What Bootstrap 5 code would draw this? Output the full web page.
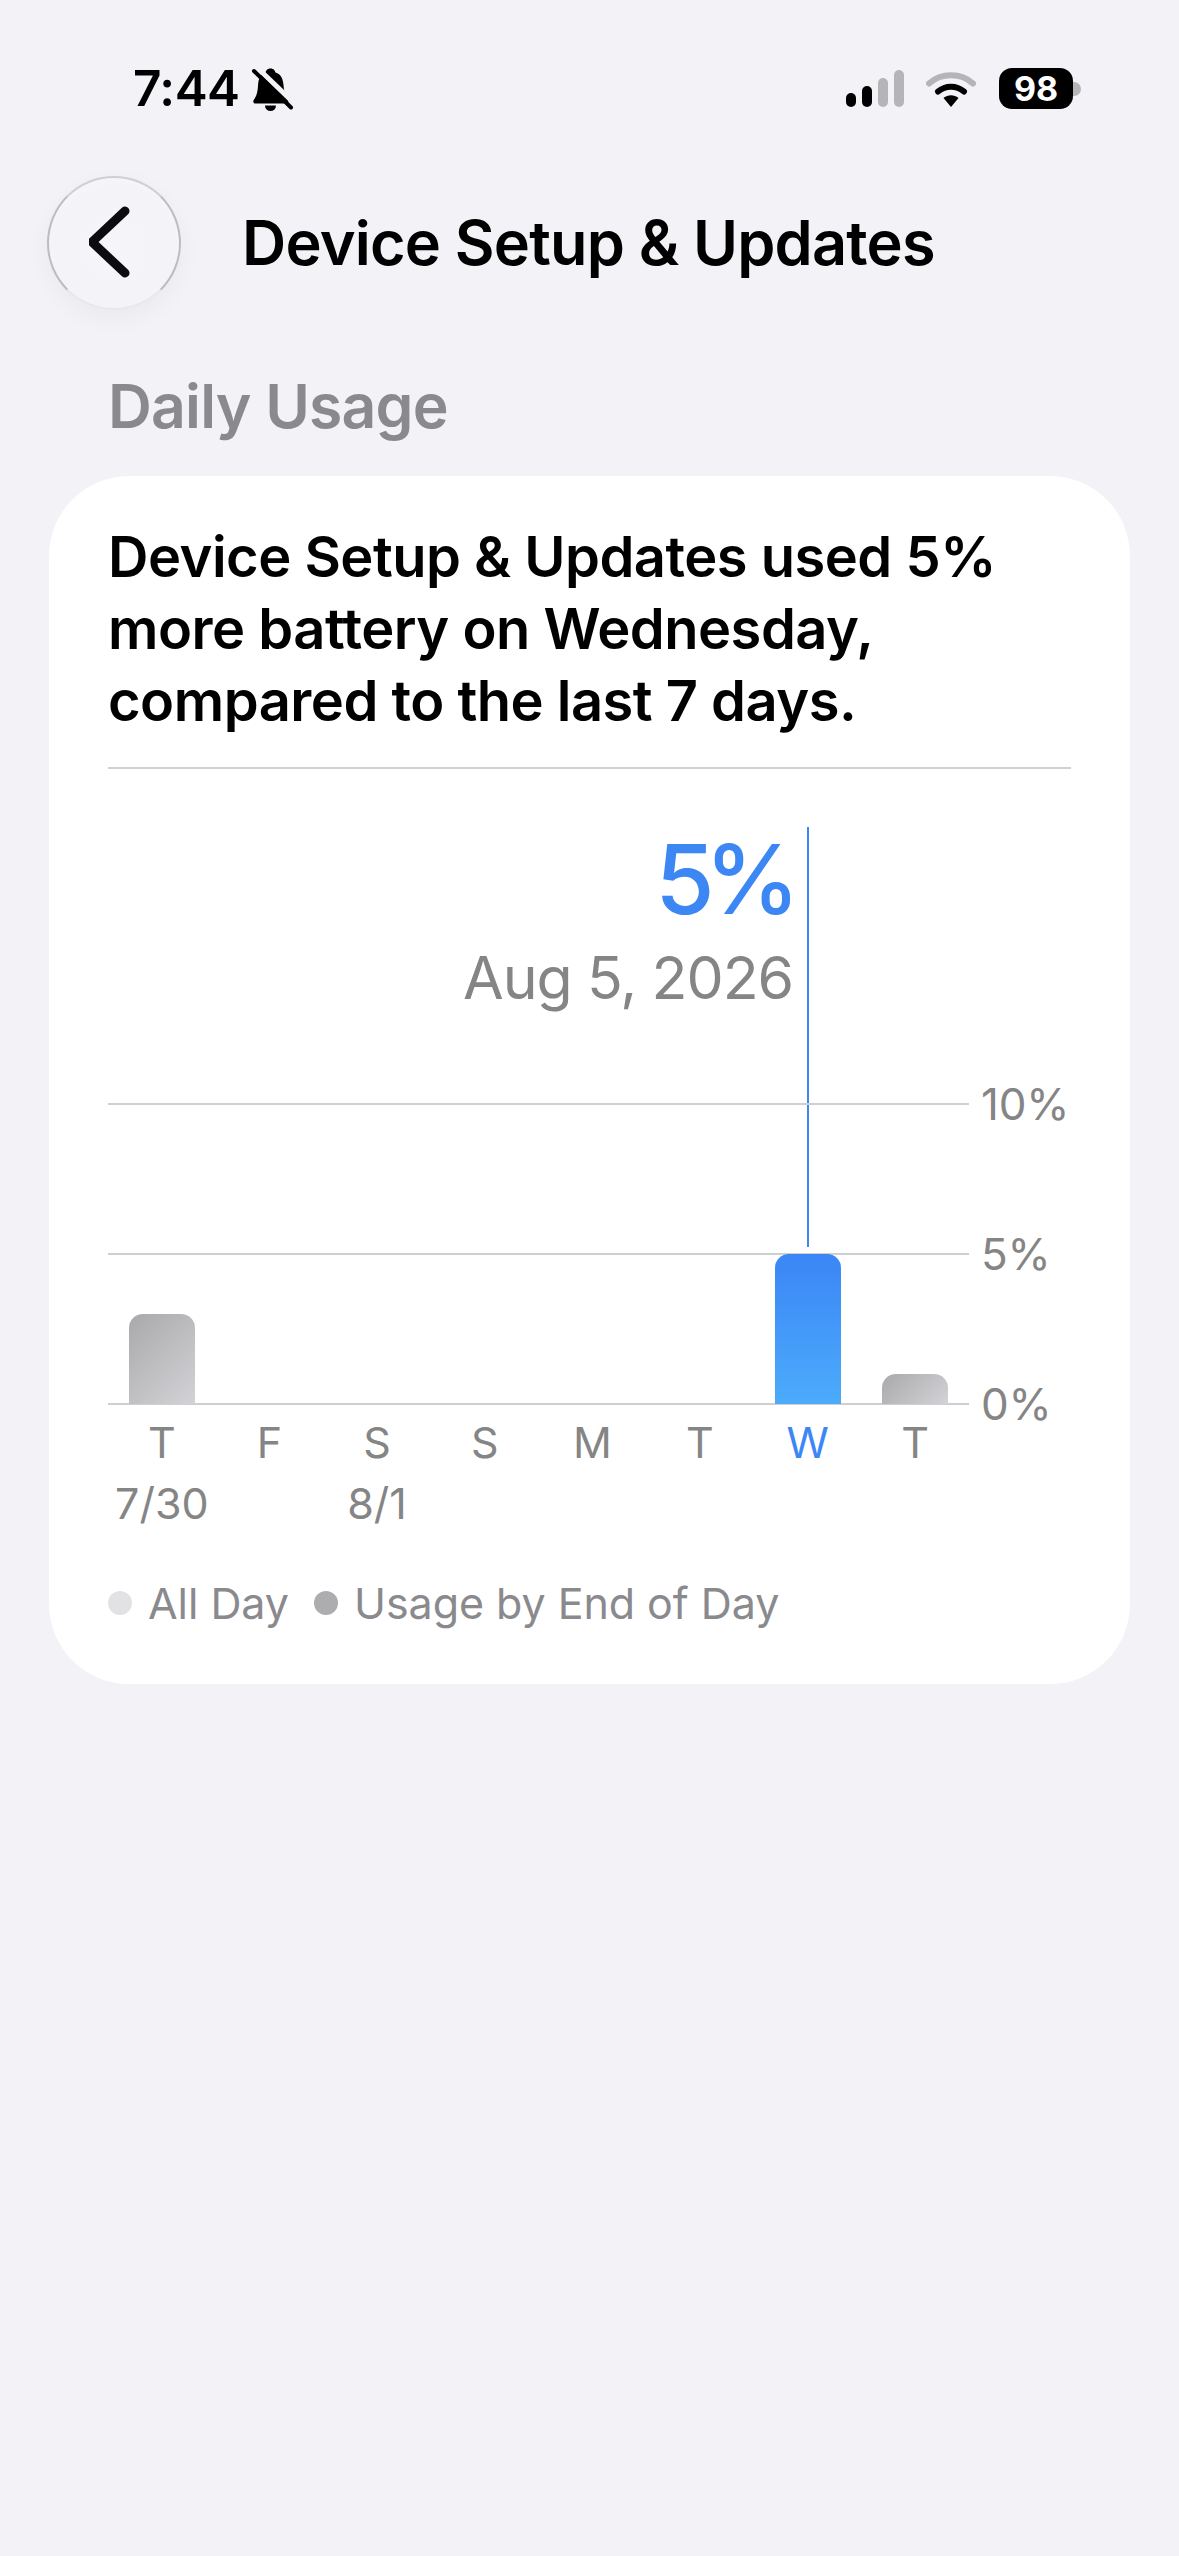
<!DOCTYPE html>
<html lang="en">
<head>
    <meta charset="UTF-8">
    <meta name="viewport" content="width=device-width, initial-scale=1.0">
    <title>Device Setup &amp; Updates</title>
    <link href="https://cdn.jsdelivr.net/npm/bootstrap@5.3.0/dist/css/bootstrap.min.css" rel="stylesheet">
    <style>
        body { background: #f2f2f7; font-family: Inter, "Liberation Sans", sans-serif; color: #000; min-height: 2556px; }
        .status-row { height: 43px; margin-top: 67px; padding: 0 98px 0 133px; }
        .status-time { font-size: 49.5px; font-weight: 600; line-height: 43px; letter-spacing: -0.5px; }
        .bell-icon { margin-left: 10px; }
        .wifi-icon { margin-left: 22px; }
        .batt-pill { width: 74px; height: 41px; margin-left: 23px; background: #000; color: #fff; border-radius: 13px; font-size: 34px; font-weight: 700; line-height: 41px; }
        .batt-nub { width: 8px; height: 14px; background: #b5b5b8; border-radius: 0 7px 7px 0; }
        .nav-row { margin-top: 66px; padding-left: 47px; gap: 61px; }
        .back-btn { width: 134px; height: 134px; padding: 0; border: 2px solid; border-color: #d0d0d4 #bdbdc1 #e8e8ec #bdbdc1; border-radius: 50%; background: radial-gradient(circle at 50% 55%, #f6f6fa 0%, #f3f3f8 60%, #fbfbfd 100%); box-shadow: 0 8px 24px rgba(0, 0, 0, .04); }
        .nav-title { font-size: 61.2px; font-weight: 600; line-height: 72px; letter-spacing: -0.8px; margin: 0; }
        .section-title { font-size: 60.7px; font-weight: 600; line-height: 72px; color: #8a8a8e; letter-spacing: -0.8px; margin: 60px 0 0; padding-left: 108px; }
        .usage-card { margin: 34px 49px 0; height: 1208px; background: #fff; border-radius: 80px; padding: 45px 59px 0; }
        .usage-text { font-size: 56px; font-weight: 600; line-height: 72px; letter-spacing: -0.5px; margin: 0; padding-bottom: 30px; border-bottom: 2px solid #d1d1d5; }
        .chart-wrap { position: relative; }
        .chart-head { height: 334px; width: 685px; padding-top: 60px; text-align: right; }
        .peak-value { font-size: 96px; line-height: 100px; font-weight: 500; color: #3d87f5; letter-spacing: -10px; padding-right: 3px; }
        .peak-date { font-size: 59px; line-height: 70px; color: #858585; margin-top: 14px; letter-spacing: -1.1px; }
        .peak-line { position: absolute; left: 699px; top: 58px; height: 420px; width: 2px; background: #3d87f5; }
        .plot-box { position: relative; height: 302px; }
        .tick-row { height: 2px; gap: 12px; }
        .tick-line { width: 861px; height: 2px; background: #cfcfd1; flex: none; }
        .tick-label { font-size: 44px; color: #858585; line-height: 50px; letter-spacing: -0.2px; }
        .bar-layer { position: absolute; left: 0; top: 0; width: 861px; height: 301px; display: grid; grid-template-columns: repeat(8, 1fr); align-items: end; justify-items: center; }
        .bar-gray { width: 66px; border-radius: 14px 14px 0 0; background: linear-gradient(135deg, #a9a9ab, #d3d3d7); }
        .bar-blue { width: 66px; border-radius: 14px 14px 0 0; background: linear-gradient(180deg, #3b86f6, #4cabfb); }
        .day-grid { width: 861px; display: grid; grid-template-columns: repeat(8, 1fr); text-align: center; font-size: 43px; line-height: 61px; color: #858585; margin-top: 7px; }
        .day-now { color: #3d87f5; }
        .legend-row { font-size: 43px; line-height: 60px; color: #8a8a8e; margin-top: 39px; letter-spacing: -0.05px; }
        .legend-dot { width: 24px; height: 24px; border-radius: 50%; flex: none; }
        .dot-light { background: #e2e2e4; margin-right: 16px; }
        .dot-dark { background: #adadb0; margin-left: 25px; margin-right: 16px; }
    </style>
</head>
<body>
    <!-- Status bar -->
    <div class="status-row d-flex align-items-center justify-content-between">
        <div class="d-flex align-items-center">
            <span class="status-time">7:44</span>
            <svg class="bell-icon" width="44" height="46" viewBox="0 0 44 46">
                <path d="M20.5 2.5C24 2.5 25 5 25.5 6.5C31 8 33 13 33.500 19C34 26 36 31 38 33.500C39 35.500 38 37.500 36 37.500L5.500 37.500C3.500 37.500 2.500 35.500 4 33.500C6 31 7.500 27 8 20C8.300 13 10 8 15.500 6.500C16 5 17 2.500 20.500 2.500Z" fill="#000"/>
                <path d="M15 39.500h11a5.500 5.500 0 0 1-11 0Z" fill="#000"/>
                <path d="M7 1.500L45 38" stroke="#f2f2f7" stroke-width="5"/>
                <path d="M4 5L41 41.500" stroke="#000" stroke-width="4" stroke-linecap="round"/>
            </svg>
        </div>
        <div class="d-flex align-items-center">
            <svg width="58" height="38" viewBox="0 0 58 38">
                <rect x="0" y="23" width="10" height="14" rx="5" fill="#000"/>
                <rect x="16" y="16" width="10" height="21" rx="5" fill="#000"/>
                <rect x="32" y="8" width="10" height="29" rx="5" fill="#b5b5b8"/>
                <rect x="48" y="0" width="10" height="37" rx="5" fill="#b5b5b8"/>
            </svg>
            <svg class="wifi-icon" width="50" height="38" viewBox="0 0 50 38">
                <path d="M3 13.500C15 2.500 35 2.500 47 13.500" fill="none" stroke="#b5b5b8" stroke-width="6" stroke-linecap="round"/>
                <path d="M12 21.500C19.500 15 30.500 15 38 21.500" fill="none" stroke="#000" stroke-width="6" stroke-linecap="round"/>
                <path d="M17.500 28C22 24.300 28 24.300 32.500 28L25 37Z" fill="#000"/>
            </svg>
            <div class="batt-pill text-center">98</div>
            <div class="batt-nub"></div>
        </div>
    </div>

    <!-- Nav -->
    <div class="nav-row d-flex align-items-center">
        <button class="back-btn d-flex align-items-center justify-content-center" type="button" aria-label="Back">
            <svg width="50" height="76" viewBox="0 0 50 76">
                <path d="M36 6L3 37L36 68" fill="none" stroke="#0c0c0e" stroke-width="9" stroke-linecap="round" stroke-linejoin="round"/>
            </svg>
        </button>
        <h1 class="nav-title">Device Setup &amp; Updates</h1>
    </div>

    <h2 class="section-title">Daily Usage</h2>

    <!-- Usage card -->
    <div class="usage-card">
        <p class="usage-text">Device Setup &amp; Updates used 5% more battery on Wednesday, compared to the last 7 days.</p>
        <div class="chart-wrap">
            <div class="chart-head">
                <div class="peak-value">5%</div>
                <div class="peak-date">Aug 5, 2026</div>
            </div>
            <div class="peak-line"></div>
            <div class="plot-box d-flex flex-column justify-content-between">
                <div class="tick-row d-flex align-items-center"><div class="tick-line"></div><span class="tick-label">10%</span></div>
                <div class="tick-row d-flex align-items-center"><div class="tick-line"></div><span class="tick-label">5%</span></div>
                <div class="tick-row d-flex align-items-center"><div class="tick-line"></div><span class="tick-label">0%</span></div>
                <div class="bar-layer">
                    <div class="bar-gray" style="height: 90px"></div>
                    <div></div><div></div><div></div><div></div><div></div>
                    <div class="bar-blue" style="height: 150px"></div>
                    <div class="bar-gray" style="height: 30px"></div>
                </div>
            </div>
            <div class="day-grid">
                <div>T<br>7/30</div>
                <div>F</div>
                <div>S<br>8/1</div>
                <div>S</div>
                <div>M</div>
                <div>T</div>
                <div class="day-now">W</div>
                <div>T</div>
            </div>
            <div class="legend-row d-flex align-items-center">
                <span class="legend-dot dot-light"></span><span>All Day</span>
                <span class="legend-dot dot-dark"></span><span>Usage by End of Day</span>
            </div>
        </div>
    </div>

    <script src="https://cdn.jsdelivr.net/npm/bootstrap@5.3.0/dist/js/bootstrap.bundle.min.js"></script>
</body>
</html>
